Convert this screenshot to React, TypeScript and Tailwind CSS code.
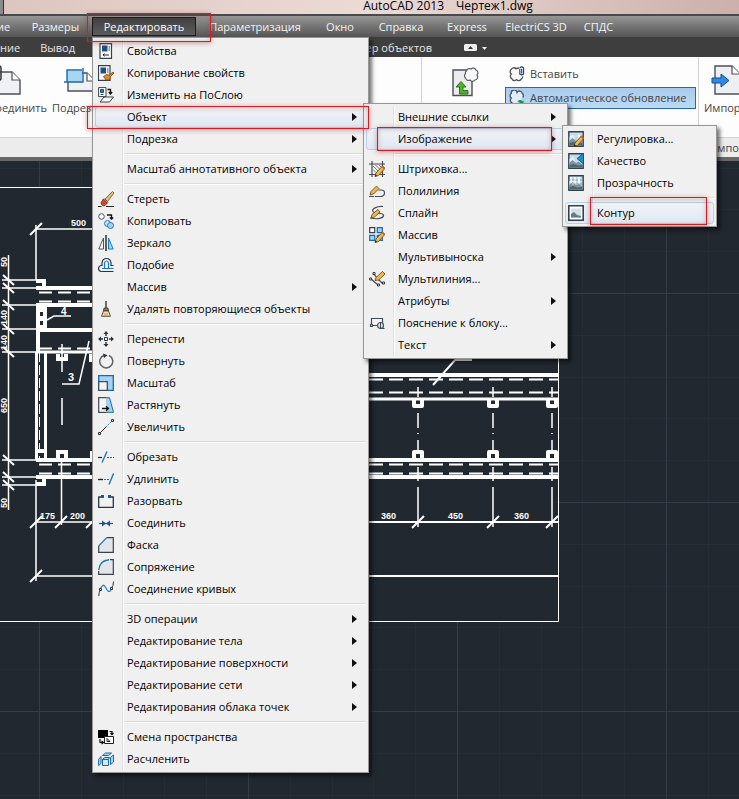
import type { ReactNode } from "react";
import clsx from "clsx";

type IconName = keyof typeof ICONS;

interface MenuEntry {
  label: string;
  icon?: IconName;
  /** has a flyout arrow */
  arrow?: boolean;
  hot?: boolean;
  /** classes of the red callout frame drawn round the entry */
  mark?: string;
  children?: MenuEntry[][];
}

/* ---------- 16x16 icons ---------- */

const pencil = (
  <g>
    <path d="M6 15.500l1-3.500L13.500 5 16 7.300 9.500 14.500z" fill="#f4b84a" stroke="#5d3a16" strokeWidth=".8" />
    <path d="M12.500 6l2.300 2.300L16 7.200 13.600 4.900z" fill="#d0603a" />
    <path d="M6 15.500l.6-2.200 1.600 1.600z" fill="#222" />
  </g>
);

const photo = (
  <g>
    <path d="M.8 .8h14.400v14.400H.8z" fill="#c3dcea" stroke="#33414c" strokeWidth="1.400" />
    <path d="M1.500 6l3-2.500L7 6l-1 3-4.500 1z" fill="#e4eef2" />
    <path d="M1.500 14.500V9.500L4.500 7 8 10l2.500-1.500 4 3v3z" fill="#7e959e" />
    <path d="M1.500 14.500V12l4-1 4 1.500 5-.5v2.500z" fill="#4e646e" />
    <circle cx="11" cy="5" r="1.500" fill="#fff" />
  </g>
);

const sheet = (
  <g>
    <path d="M2 .7h11.500v14.600H2z" fill="#fff" stroke="#33414c" strokeWidth="1.200" />
    <path d="M4 2.500h5.500v6H4z" fill="#1c4f86" />
    <path d="M10.500 3h1.500v5h-1.500z" fill="#7ea5cc" />
  </g>
);

const ICONS = {
  props: (
    <g>
      {sheet}
      <path d="M5 12h6M5 12l1.500-1.300M5 12l1.500 1.300" stroke="#222" fill="none" />
    </g>
  ),
  matchProps: (
    <g>
      <g transform="translate(-1.500 0)">{sheet}</g>
      <path d="M5.500 11.500l3-2 3 .5L15 7l1 1-3.500 3.500-1 3.500H8z" fill="#d98b2b" stroke="#7b4310" strokeWidth=".8" />
    </g>
  ),
  byLayer: (
    <g fill="none" stroke="#33414c">
      <path d="M2 15l4-5h9.500l-4 5z" fill="#fff" />
      <path d="M.6 .6h7.400v9H.6z" fill="#fff" />
      <path d="M2.500 2.500h3v3h-3z" fill="#3476b5" stroke="#1c4f86" />
      <path d="M2.500 7.500h3" />
      <path d="M9.500 2.500h3v4M10.800 5l1.700 2 1.700-2" stroke="#111" strokeWidth="1.300" />
    </g>
  ),
  erase: (
    <g>
      <path d="M7 8l7.500-7.500L16 2l-6.500 8.500z" fill="#e9bd74" stroke="#6b4a20" strokeWidth=".8" />
      <path d="M6 7.500l4 4-1 1-4-4z" fill="#ddd" stroke="#555" strokeWidth=".6" />
      <path d="M3 11.500l2.500-3.500 3.800 4L7 14.500q-3.500 1-4-3z" fill="#cf4a26" stroke="#7b2510" strokeWidth=".8" />
      <path d="M0 15.500h3.500M8 15.500h8" stroke="#222" />
    </g>
  ),
  copy: (
    <g fill="none">
      <circle cx="3.500" cy="3.500" r="2.800" fill="#fff" stroke="#4b5560" />
      <path d="M9 2h4.500v4M11.800 4.500l1.700 1.700 1.700-1.700" stroke="#111" strokeWidth="1.300" />
      <circle cx="9.500" cy="10.500" r="3" fill="#cde6f8" stroke="#1d78c4" />
      <circle cx="12.500" cy="12.500" r="3" fill="#a5d2f2" stroke="#1d78c4" />
    </g>
  ),
  mirror: (
    <g>
      <path d="M5.500 3v11H.8z" fill="#fff" stroke="#4b5560" />
      <path d="M10.500 3v11h4.700z" fill="#a5d2f2" stroke="#1d78c4" />
      <path d="M8 0v16" stroke="#222" strokeWidth="1.400" />
    </g>
  ),
  offset: (
    <g fill="none" strokeWidth="1.200">
      <path d="M15.500 14.500H3q-2.500-.5-2.500-3T3 8.500h1V6q.5-4.500 4.500-4.500T13 6v2.500h2.500" stroke="#243746" />
      <path d="M15.500 11.500H4M6.500 11V6q.3-2 2-2t2 2v5" stroke="#1d78c4" />
    </g>
  ),
  overkill: (
    <g>
      <path d="M7.300 0h1.400v7H7.300z" fill="#333" />
      <path d="M6 7h4l.5 3h-5z" fill="#8a7757" stroke="#333" strokeWidth=".8" />
      <path d="M5.500 10h5l2 5.300h-9z" fill="#f6dfa2" stroke="#4c4130" strokeWidth=".9" />
      <path d="M7 12v3M9 12v3" stroke="#a98b4c" strokeWidth=".8" />
    </g>
  ),
  move: (
    <g fill="#2b333b">
      <path d="M8 0l2.500 3h-5zM8 16l2.500-3h-5zM0 8l3-2.500v5zM16 8l-3-2.500v5z" />
      <path d="M7.300 3h1.400v2H7.300zM7.300 11h1.400v2H7.300zM3 7.300h2v1.400H3zM11 7.300h2v1.400h-2z" />
      <path d="M6.500 6.500h3v3h-3z" fill="#fff" stroke="#2b333b" />
    </g>
  ),
  rotate: (
    <g fill="none" stroke="#606468" strokeWidth="1.500">
      <path d="M11 2.500a6.500 6.500 0 1 1-5-.2" />
      <path d="M5 .5l4.500 1.800L6 5z" fill="#333" stroke="none" />
    </g>
  ),
  scale: (
    <g>
      <path d="M.7 .7h14.600v14.600H.7z" fill="#a5d2f2" stroke="#1769ae" strokeWidth="1.300" />
      <path d="M.7 6.700h8.600v8.600H.7z" fill="#f4f4f4" stroke="#444c54" strokeWidth="1.300" />
    </g>
  ),
  stretch: (
    <g>
      <path d="M7.500 .7h4l4 14.600h-8z" fill="#a5d2f2" stroke="#1769ae" />
      <path d="M8 .7H.7v14.600H8" fill="#f4f4f4" stroke="#444c54" strokeWidth="1.200" />
      <path d="M4 11.500h6M8 9.300l2.500 2.200L8 13.700" stroke="#111" fill="none" strokeWidth="1.300" />
    </g>
  ),
  lengthen: (
    <g fill="#fff" stroke="#333">
      <path d="M2 14L8 8" />
      <path d="M8 8l6-6" stroke="#2f7fd0" strokeDasharray="2 1" />
      <path d="M.5 13.500h2v2h-2zM13.500.5h2v2h-2z" />
    </g>
  ),
  trim: (
    <g fill="none" strokeWidth="1.200">
      <path d="M0 8.500h4" stroke="#222" />
      <path d="M9 8.500h7" stroke="#1d6fc0" strokeDasharray="2 1" />
      <path d="M4 13.500L9 2.500" stroke="#1d78c4" strokeWidth="1.400" />
    </g>
  ),
  extend: (
    <g fill="none" strokeWidth="1.200">
      <path d="M0 8.500h5" stroke="#222" strokeWidth="1.400" />
      <path d="M6 8.500h5" stroke="#1d6fc0" strokeDasharray="2 1" />
      <path d="M11 13.500l4.500-11" stroke="#1d78c4" strokeWidth="1.400" />
    </g>
  ),
  breakAt: (
    <g>
      <path d="M3 4H.7v10.300h14.600V4H13" fill="#f1f1f1" stroke="#2d3742" strokeWidth="1.300" />
      <path d="M3 2h3v3H3zM10 2h3v3h-3z" fill="#155a9c" />
    </g>
  ),
  join: (
    <g>
      <path d="M1 8.500h14" stroke="#1b568f" strokeWidth="1.200" />
      <path d="M4 5.500l4 3-4 3zM12 5.500l-4 3 4 3z" fill="#1b568f" />
    </g>
  ),
  chamfer: (
    <g>
      <path d="M1 15V9l7.500-8.300h6.800v14.600H1z" fill="#e4e5e9" />
      <path d="M8.500 .7h6.800v14.600H.7V9" fill="none" stroke="#3a434c" strokeWidth="1.200" />
      <path d="M.7 9L8.500 .9" stroke="#1d78c4" strokeWidth="1.300" />
    </g>
  ),
  fillet: (
    <g>
      <path d="M.7 15V10Q2 1.500 11 .7h4.300v14.600z" fill="#e4e5e9" />
      <path d="M12 .7h3.300v14.600H.7V12" fill="none" stroke="#3a434c" strokeWidth="1.200" />
      <path d="M.7 11Q1.500 1.700 11 .8" stroke="#1d78c4" strokeWidth="1.400" fill="none" />
    </g>
  ),
  blend: (
    <g fill="none">
      <path d="M.8 15q0-4 1.500-6M13.500 7q2-2 2-6.500" stroke="#333" />
      <path d="M2.500 7.500C5 2.500 6.500 4 8 7s3.500 5.500 5.500 1" stroke="#2a86d8" strokeWidth="1.300" />
      <path d="M1.500 7.500h2v2h-2zM12.500 6.500h2v2h-2z" fill="#fff" stroke="#333" />
    </g>
  ),
  space: (
    <g>
      <path d="M0 1h10v8H0z" fill="#000" />
      <path d="M11.500 2.500h2.500v3M12.500 4l1.500 1.700L15.500 4M2 10v3.500h3M3.500 12l2 1.500-2 1.500" stroke="#111" fill="none" strokeWidth="1.200" />
      <path d="M6.500 7.500h9v7h-9z" fill="#fff" stroke="#222" />
      <path d="M9 9.500v3h3z" fill="none" stroke="#222" />
    </g>
  ),
  explode: (
    <g stroke="#1769ae" fill="#a9dcf4">
      <path d="M4.500 4.500l3-2.500h6l-3 2.500zM.6 8.500L3 5.500v7L.6 14.500zM12.500 6.500l3-2.500v7l-3 2.500z" />
      <path d="M4.500 8.500h6v6h-6z" fill="#c9ecfa" />
      <path d="M4.500 8.500l2-2h5l-1 2z" />
    </g>
  ),
  hatch: (
    <g>
      <path d="M0 3h16M0 13.500h16M3 0v16M13.500 0v16" stroke="#444c54" strokeWidth="1.200" />
      <path d="M4 5l7 7M4 8.500l4 4M6.500 4l6 6M10 4l3 3" stroke="#666" strokeWidth=".8" />
      {pencil}
    </g>
  ),
  polyline: (
    <g>
      <path d="M6 13.500h6q3.500-.5 3.500-3.500T12 7H9.500M5 13.500H0" stroke="#444c54" strokeWidth="1.200" fill="none" />
      <path d="M1 12l1-3.500L7.500 3l2.500 2.500L4.500 11z" fill="#f4b84a" stroke="#5d3a16" strokeWidth=".8" />
    </g>
  ),
  spline: (
    <g>
      <path d="M14 1.500C8 1 2 4 4 6.500s10 1 10.500 3.500S10 15 1 13" stroke="#444c54" strokeWidth="1.200" fill="none" />
      <path d="M2 13l1-3.500L9 4.500l2 2.500-5.500 5z" fill="#f4b84a" stroke="#5d3a16" strokeWidth=".8" />
    </g>
  ),
  array: (
    <g>
      <path d="M.7 .7h5v5h-5z" fill="#fff" stroke="#33414c" strokeWidth="1.200" />
      <path d="M8.300 .7h5v5h-5zM.7 8.300h5v5h-5zM8.300 8.300h5v5h-5z" fill="#a5d2f2" stroke="#1769ae" strokeWidth="1.200" />
      {pencil}
    </g>
  ),
  mline: (
    <g>
      <path d="M2 8l7 6M5 3l3 4 6 6" stroke="#444c54" strokeWidth="1.200" fill="none" />
      <path d="M.6 7h2v2h-2zM4 1.600h2v2H4zM8.500 13h2v2h-2zM13.500 11h2v2h-2z" fill="#fff" stroke="#333" />
      <path d="M6 9.500L7 6.500 13.500.5 16 3l-6.500 6z" fill="#f4b84a" stroke="#5d3a16" strokeWidth=".8" />
    </g>
  ),
  annot: (
    <g fill="#f4f4f4" stroke="#444c54" strokeWidth="1.200">
      <path d="M2.500 3.500h11v7h-11z" />
      <path d="M1.500 9.500h2v2h-2z" />
      <circle cx="11.500" cy="10.500" r="3" />
      <path d="M11.500 8v5.500h4" fill="none" />
    </g>
  ),
  imgAdjust: (
    <g>
      {photo}
      {pencil}
    </g>
  ),
  imgQuality: (
    <g>
      {photo}
      <path d="M9 5.500L15.500 0v11z" fill="#1b8fd0" stroke="#0f4f82" strokeWidth=".8" />
    </g>
  ),
  imgAlpha: (
    <g>
      {photo}
      <path d="M2 3h12M2 7h12" stroke="#f0f3f5" strokeWidth="2" strokeDasharray="2 2" />
      <path d="M4 5h10M4 9h10" stroke="#a9b9c2" strokeWidth="2" strokeDasharray="2 2" />
    </g>
  ),
  imgFrame: (
    <g>
      <path d="M.8 .8h14.400v14.400H.8z" fill="#fff" stroke="#33414c" strokeWidth="1.600" />
      <path d="M3 3.500h10v9H3z" fill="#cfe1ea" />
      <path d="M3 12.500V9l3-2 3 3 4 1v1.500z" fill="#647b85" />
    </g>
  ),
};

function Icon({ name }: { name: IconName }) {
  return (
    <svg viewBox="0 0 16 16" className="size-4" aria-hidden="true">
      {ICONS[name]}
    </svg>
  );
}

/* ---------- menu data ---------- */

const IMAGE_MENU: MenuEntry[][] = [
  [
    { label: "Регулировка...", icon: "imgAdjust" },
    { label: "Качество", icon: "imgQuality" },
    { label: "Прозрачность", icon: "imgAlpha" },
  ],
  [{ label: "Контур", icon: "imgFrame", hot: true, mark: "left-[25px] right-[7px] -top-[5px] -bottom-px" }],
];

const OBJECT_MENU: MenuEntry[][] = [
  [
    { label: "Внешние ссылки", arrow: true },
    {
      label: "Изображение",
      arrow: true,
      hot: true,
      mark: "left-[11px] right-[13px] -inset-y-px",
      children: IMAGE_MENU,
    },
  ],
  [
    { label: "Штриховка...", icon: "hatch" },
    { label: "Полилиния", icon: "polyline" },
    { label: "Сплайн", icon: "spline" },
    { label: "Массив", icon: "array" },
    { label: "Мультивыноска", arrow: true },
    { label: "Мультилиния...", icon: "mline" },
    { label: "Атрибуты", arrow: true },
    { label: "Пояснение к блоку...", icon: "annot" },
    { label: "Текст", arrow: true },
  ],
];

const EDIT_MENU: MenuEntry[][] = [
  [
    { label: "Свойства", icon: "props" },
    { label: "Копирование свойств", icon: "matchProps" },
    { label: "Изменить на ПоСлою", icon: "byLayer" },
    { label: "Объект", arrow: true, hot: true, mark: "-left-2 -right-[3px] top-0 -bottom-px", children: OBJECT_MENU },
    { label: "Подрезка", arrow: true },
  ],
  [{ label: "Масштаб аннотативного объекта", arrow: true }],
  [
    { label: "Стереть", icon: "erase" },
    { label: "Копировать", icon: "copy" },
    { label: "Зеркало", icon: "mirror" },
    { label: "Подобие", icon: "offset" },
    { label: "Массив", arrow: true },
    { label: "Удалять повторяющиеся объекты", icon: "overkill" },
  ],
  [
    { label: "Перенести", icon: "move" },
    { label: "Повернуть", icon: "rotate" },
    { label: "Масштаб", icon: "scale" },
    { label: "Растянуть", icon: "stretch" },
    { label: "Увеличить", icon: "lengthen" },
  ],
  [
    { label: "Обрезать", icon: "trim" },
    { label: "Удлинить", icon: "extend" },
    { label: "Разорвать", icon: "breakAt" },
    { label: "Соединить", icon: "join" },
    { label: "Фаска", icon: "chamfer" },
    { label: "Сопряжение", icon: "fillet" },
    { label: "Соединение кривых", icon: "blend" },
  ],
  [
    { label: "3D операции", arrow: true },
    { label: "Редактирование тела", arrow: true },
    { label: "Редактирование поверхности", arrow: true },
    { label: "Редактирование сети", arrow: true },
    { label: "Редактирования облака точек", arrow: true },
  ],
  [
    { label: "Смена пространства", icon: "space" },
    { label: "Расчленить", icon: "explode" },
  ],
];

const SUBMENU: Record<string, string> = {
  Объект: "left-full -top-[3px] -ml-[3px] w-[205px]",
  Изображение: "left-full -top-[3px] -ml-[3px] w-[155px]",
};

const MARK =
  "pointer-events-none absolute z-30 border border-[#cf1f26] shadow-[0_1px_5px_rgba(150,40,40,0.45),inset_0_1px_5px_rgba(150,60,60,0.35)]";

function Menu({ groups, className }: { groups: MenuEntry[][]; className: string }) {
  return (
    <div
      className={clsx(
        "absolute z-20 border border-[#979797] bg-[#f0f0f0] p-[2px] text-black shadow-[3px_3px_4px_rgba(0,0,0,0.55)]",
        className,
      )}
    >
      <div className="pointer-events-none absolute inset-y-[2px] left-[29px] w-[2px] border-r border-l border-r-white border-l-[#e0e0e0]" />
      {groups.map((group, i) => (
        <ul key={i} role="menu">
          {i > 0 && (
            <li role="separator" className="flex h-2 items-center pl-7">
              <span className="h-[2px] w-full border-t border-b border-t-[#dcdcdc] border-b-white" />
            </li>
          )}
          {group.map((entry) => (
            <li key={entry.label} className="relative">
              <button
                type="button"
                role="menuitem"
                className={clsx(
                  "relative flex h-[22px] w-full items-center rounded-[3px] border pr-2 pl-[2px] text-left",
                  entry.hot
                    ? "border-[#b5d0ea] bg-linear-to-b from-[#f1f3f7] to-[#e0e8f3]"
                    : "border-transparent",
                )}
              >
                <span className="mr-[13px] size-4 shrink-0">{entry.icon && <Icon name={entry.icon} />}</span>
                <span className="grow whitespace-nowrap">{entry.label}</span>
                {entry.arrow && (
                  <svg viewBox="0 0 5 8" className="h-2 w-[5px]" aria-hidden="true">
                    <path d="M0 0l5 4-5 4z" fill="#111" />
                  </svg>
                )}
              </button>
              {entry.children && <Menu groups={entry.children} className={SUBMENU[entry.label]} />}
              {entry.mark && <span className={clsx(MARK, entry.mark)} />}
            </li>
          ))}
        </ul>
      ))}
    </div>
  );
}

/* ---------- window chrome ---------- */

function MenuBar() {
  const item = "flex h-full shrink-0 items-center justify-center whitespace-nowrap";
  return (
    <nav className="relative z-20 flex h-[21px] items-stretch bg-linear-to-b from-[#969696] to-[#555] text-[#f4f4f4]">
      <button type="button" className={clsx(item, "w-[19px] pr-3")}>ие</button>
      <button type="button" className={clsx(item, "w-[73px]")}>Размеры</button>
      <div className="relative w-[104px] shrink-0 py-px">
        <button
          type="button"
          aria-expanded="true"
          className={clsx(item, "w-full border border-[#1c1c1c] bg-linear-to-b from-[#404040] to-[#5c5c5c] text-white")}
        >
          Редактировать
        </button>
        <span className={clsx(MARK, "-top-[3px] -right-[15px] -bottom-[5px] -left-[5px]")} />
        <Menu groups={EDIT_MENU} className="top-full left-0 w-[277px]" />
      </div>
      <button type="button" className={clsx(item, "w-[118px]")}>Параметризация</button>
      <button type="button" className={clsx(item, "w-[52px]")}>Окно</button>
      <button type="button" className={clsx(item, "w-[70px]")}>Справка</button>
      <button type="button" className={clsx(item, "w-[62px]")}>Express</button>
      <button type="button" className={clsx(item, "w-[76px]")}>ElectriCS 3D</button>
      <button type="button" className={clsx(item, "w-[49px]")}>СПДС</button>
    </nav>
  );
}

function RibbonTabs() {
  return (
    <div className="flex h-5 items-center bg-[#3e3e3e] pt-[2px] text-[#e6e6e6]">
      <div className="flex w-[432px] shrink-0 justify-between whitespace-nowrap">
        <div className="flex gap-5">
          <button type="button">ние</button>
          <button type="button">Вывод</button>
        </div>
        <button type="button">Менеджер объектов</button>
      </div>
      <button type="button" aria-label="Свернуть ленту" className="ml-8 flex items-center gap-1">
        <svg viewBox="0 0 23 8" className="h-2 w-[23px]" aria-hidden="true">
          <rect x="0" y="0" width="13" height="7" rx="1.500" fill="#eee" />
          <path d="M4 5l2.500-3L9 5z" fill="#333" />
          <path d="M18 3h5l-2.500 3z" fill="#eee" />
        </svg>
      </button>
    </div>
  );
}

const CLOUD =
  "M3.500 5A3 3 0 0 1 8 3A3 3 0 0 1 13 4A3 3 0 0 1 14 9A3 3 0 0 1 12 14A3 3 0 0 1 7 14A3 3 0 0 1 2.500 12A3 3 0 0 1 2.500 7.500A2 2 0 0 1 3.500 5z";

function RibbonIcon({ children, className, box }: { children: ReactNode; className: string; box: string }) {
  return (
    <svg viewBox={box} className={clsx("shrink-0", className)} aria-hidden="true">
      {children}
    </svg>
  );
}

function Ribbon() {
  return (
    <div className="text-[#444]">
      <div className="flex h-20 bg-[#fdfdfd]">
        <div className="flex w-[422px] shrink-0 justify-start border-r border-[#d2d2d2]">
          <button type="button" className="flex w-[47px] flex-col items-end justify-start pt-2">
            <RibbonIcon box="0 0 30 31" className="mr-[25px] h-[31px] w-[30px]">
              <path d="M1 7h19l8 8v14H1z" fill="#f0f1f4" stroke="#4b5058" strokeWidth="1.400" />
              <path d="M20 7v8h8" fill="#fff" stroke="#4b5058" strokeWidth="1.200" />
              <path d="M5 14V3q0-2 2-2t2 2v11q-1 2-3 1" fill="none" stroke="#333" strokeWidth="1.500" />
            </RibbonIcon>
            <span className="mt-[4px]">Присоединить</span>
          </button>
          <button type="button" className="ml-[5px] flex flex-col items-start pt-2">
            <RibbonIcon box="0 0 34 31" className="ml-3 h-[31px] w-[34px]">
              <path d="M4 8h19l8 8v10H4z" fill="#f0f1f4" stroke="#4b5058" strokeWidth="1.400" />
              <path d="M23 8v8h8" fill="#fff" stroke="#4b5058" strokeWidth="1.200" />
              <path d="M3 6h15v11H3z" fill="#a8d5f0" />
              <path d="M3 17V5h15M0 17h19V3" fill="none" stroke="#1769ae" strokeWidth="1.400" />
            </RibbonIcon>
            <span className="mt-[4px]">Подрезать</span>
          </button>
        </div>
        <div className="flex w-[277px] shrink-0 border-r border-[#d2d2d2] pt-2">
          <div className="flex w-[83px] shrink-0 justify-center pl-1">
            <button type="button" aria-label="Обновить" className="h-8">
              <RibbonIcon box="0 0 28 31" className="h-[31px] w-7">
                <path d="M1 4h19v25.500H1z" fill="#ececf0" stroke="#4b5058" strokeWidth="1.400" />
                <g transform="translate(11 0)">
                  <path d={CLOUD} fill="#f8f8fa" stroke="#5a5f66" strokeWidth="1.200" />
                </g>
                <path d="M4 21l5-5.500L14 21h-3v3.500h5V28H7.500v-7z" fill="#4fb32a" stroke="#256d0c" strokeWidth=".9" />
              </RibbonIcon>
            </button>
          </div>
          <div className="flex w-[191px] flex-col">
            <button type="button" className="flex h-[18px] items-center gap-[5px] pl-1">
              <RibbonIcon box="0 0 17 17" className="size-4">
                <path d="M11 2.500A3 3 0 0 0 7.500 3A3 3 0 0 0 2.500 3.500A3 3 0 0 0 2.500 8.500A3 3 0 0 0 3 13.500A3 3 0 0 0 8 14.500A3 3 0 0 0 13 14A3 3 0 0 0 14.500 11" fill="#f8f8fa" stroke="#4b5058" strokeWidth="1.400" />
                <path d="M11.500 3v5.500q2 2 4 0V2q-2-2-4 0M13.500 3v5" fill="#fff" stroke="#1c3f73" strokeWidth="1.200" />
              </RibbonIcon>
              Вставить
            </button>
            <button
              type="button"
              aria-pressed="true"
              className="mt-1 flex h-[22px] items-center gap-[5px] border border-[#2a67ab] bg-linear-to-b from-[#a9cbec] to-[#bcdaf5] pl-[3px] whitespace-nowrap"
            >
              <RibbonIcon box="0 0 17 17" className="size-4">
                <path d="M14.500 8A3 3 0 0 0 14 3.500A3 3 0 0 0 8.500 2.500A3 3 0 0 0 2.500 3.500A3 3 0 0 0 2.500 8.500A3 3 0 0 0 3 13.500A3 3 0 0 0 8 14.500" fill="#e2edf7" stroke="#4b5058" strokeWidth="1.400" />
                <path d="M9 12q3-3 5 0l1.500-1v4.500h-4.500l1.300-1.500q-1.500-1-3.300-2z" fill="#1f9a3c" />
              </RibbonIcon>
              Автоматическое обновление
            </button>
          </div>
        </div>
        <button type="button" className="flex min-w-0 grow flex-col items-start overflow-hidden pt-2 pl-[5px]">
          <RibbonIcon box="0 0 32 31" className="ml-[7px] h-[31px] w-8">
            <path d="M4 1h17l8 8v20H4z" fill="#eeeff3" stroke="#4b5058" strokeWidth="1.400" />
            <path d="M21 1v8h8" fill="#fff" stroke="#4b5058" strokeWidth="1.200" />
            <path d="M1 13h9V9l8 6.500-8 6.500v-4H1z" fill="#2f8be0" stroke="#124c94" />
          </RibbonIcon>
          <span className="mt-[4px]">Импорт</span>
        </button>
      </div>
      <div className="flex h-5 items-center border-t border-[#d4d4d4] bg-[#ececec]">
        <div className="w-[698px] shrink-0" />
        <span className="grow overflow-hidden border-l border-[#d2d2d2] pl-[10px]">Импорт</span>
      </div>
      <div className="h-1 bg-[#686868]" />
    </div>
  );
}

/* ---------- model space ---------- */

const COLUMNS = [418, 493, 552];

function Tick({ x, y }: { x: number; y: number }) {
  return <path d={`M${x - 6} ${y + 6}l12-12`} stroke="#fff" strokeWidth="2" />;
}

function Drawing() {
  return (
    <svg className="absolute inset-0 size-full" aria-label="Чертеж1">
      <defs>
        <pattern id="grid" x="39" y="84" width="209" height="209" patternUnits="userSpaceOnUse">
          <path
            d="M42.500 0v209M84.500 0v209M125.500 0v209M167.500 0v209M0 42.500h209M0 84.500h209M0 125.500h209M0 167.500h209"
            stroke="#262d37"
          />
          <path d="M.5 0v209M0 .5h209" stroke="#343c47" />
        </pattern>
      </defs>
      <g transform="translate(0 -161)" fill="none" stroke="#fff">
        <rect y="161" width="100%" height="100%" fill="url(#grid)" stroke="none" />
        <path d="M-1 187.500h559.500v434H-1" fill="#212830" />

        {/* left dimension chain */}
        <path d="M8.500 255v255" strokeWidth="1.500" />
        <path d="M2 280h34M2 288h34M2 305h34M2 329h34M2 352h34M2 460h34M2 477h34M2 485h34" strokeWidth="1.500" />
        {[280, 288, 305, 329, 352, 460, 477, 485].map((y) => (
          <path key={y} d={`M3 ${y - 5}l11 10`} strokeWidth="2" />
        ))}
        <path d="M36 225v55M36 480v101M36 229h60M36 522h56M36 576h60" strokeWidth="1.500" />
        <Tick x={36} y={229} />
        <Tick x={36} y={522} />
        <Tick x={61} y={522} />
        <Tick x={92} y={522} />
        <Tick x={36} y={576} />

        {/* left wall and beams */}
        <path d="M36 281h8v7M36 484h8v-7M36 288h60M36 305h60" strokeWidth="4" />
        <path d="M39 292.500h57M39 301.500h57M39 464.500h57M39 473.500h57" strokeWidth="2" strokeDasharray="13 6" />
        <path d="M45 307v24M38 307v46" strokeWidth="4" />
        <path d="M41.500 307v24" strokeWidth="4" strokeDasharray="5 4" />
        <path d="M38 330h58M36 460h60M36 477h60" strokeWidth="4" />
        <path d="M39 348.500h57" strokeWidth="2" strokeDasharray="13 6" />
        <path d="M36 352h60M36.500 352v108M45.500 352v108" strokeWidth="3" />
        <path d="M39.500 352v108" strokeDasharray="10 3" />
        <path d="M38 451h8M58 354v5h8v-5M58 460v-8h8v8M92 460v-9M91 354v8" strokeWidth="4" />
        <path d="M62 344v28M62 398v27M61.500 460v65" strokeWidth="1.500" />
        <path d="M47 320l7-4h17M62 384h17l10-43" strokeWidth="1.500" />

        {/* right bay */}
        <path d="M366 375h192M366 460h192M366 477h192" strokeWidth="4" />
        <path d="M366 399h192" strokeWidth="3" />
        <path d="M369 379.500h189M369 392.500h189M369 464.500h189M369 473.500h189" strokeWidth="2" strokeDasharray="14 6" />
        <path d="M366 522h192M366 576h192M433 385l22-25h17" strokeWidth="2" />
        {COLUMNS.map((x) => (
          <g key={x}>
            <path d={`M${x - 4} 400v6h8v-6M${x - 4} 460v-8h8v8`} strokeWidth="4" strokeLinejoin="round" />
            <path
              d={`M${x} 387v10M${x} 413v15M${x} 433v1M${x} 440v11M${x} 467v14M${x} 487v40`}
              strokeWidth="1.500"
            />
            <Tick x={x} y={522} />
          </g>
        ))}

        <g fill="#fff" stroke="none" fontWeight="bold" fontSize="9">
          <text x="71" y="226">500</text>
          <text x="40" y="519">175</text>
          <text x="70" y="519">200</text>
          <text x="381" y="519">360</text>
          <text x="448" y="519">450</text>
          <text x="514" y="519">360</text>
          <text x="61" y="315" fontSize="10">4</text>
          <text x="68" y="381" fontSize="11">3</text>
          <text transform="translate(7 267) rotate(-90)">50</text>
          <text transform="translate(7 325) rotate(-90)">140</text>
          <text transform="translate(7 350) rotate(-90)">140</text>
          <text transform="translate(7 413) rotate(-90)">650</text>
          <text transform="translate(7 508) rotate(-90)">50</text>
        </g>
      </g>
    </svg>
  );
}

export default function App() {
  return (
    <div className="flex min-h-screen flex-col overflow-hidden bg-[#212830] font-['Open_Sans','Noto_Sans',sans-serif] text-[11px] leading-4">
      <header className="flex h-4 shrink-0 overflow-hidden border-b-2 border-[#4a4a4a] bg-linear-to-r from-[#dcc6bf] via-[#ecdad5] to-[#cbb0ab] text-black">
        <div className="w-1 shrink-0 border-r border-[#333] bg-[#8a8a8a]" />
        <h1 className="flex grow justify-center gap-3 pl-[153px] text-[12px] leading-3 whitespace-nowrap">
          <span>AutoCAD 2013</span>
          <span>Чертеж1.dwg</span>
        </h1>
      </header>
      <MenuBar />
      <RibbonTabs />
      <Ribbon />
      <main className="relative grow font-['Liberation_Sans',sans-serif]">
        <Drawing />
      </main>
    </div>
  );
}
